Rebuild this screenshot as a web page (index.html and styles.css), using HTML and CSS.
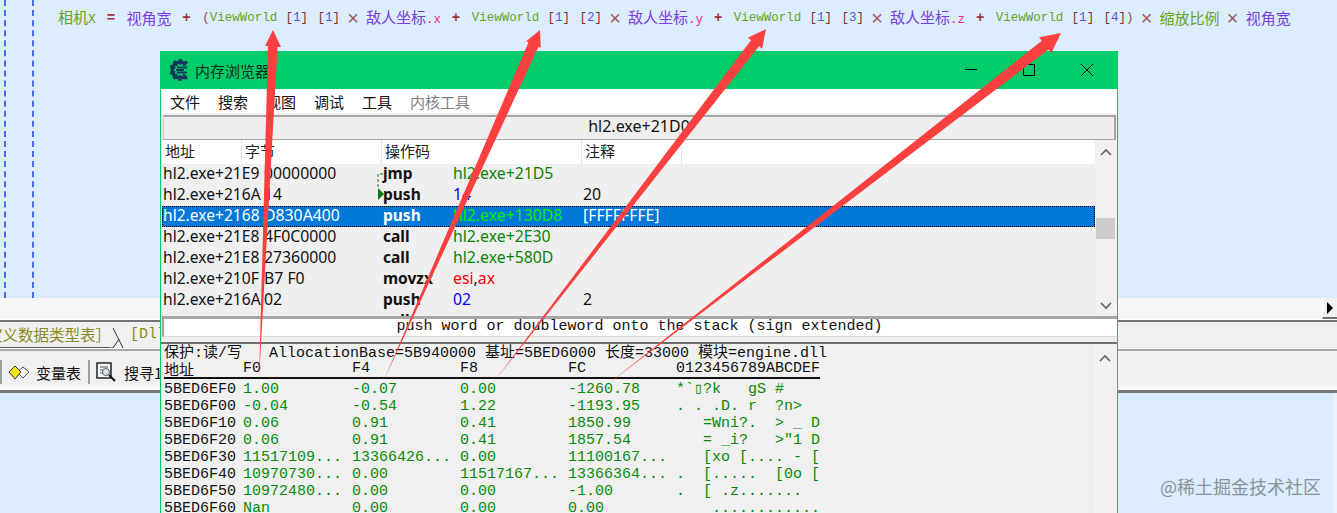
FILE: index.html
```html
<!DOCTYPE html>
<html lang="zh">
<head>
<meta charset="utf-8">
<title>内存浏览器</title>
<link rel="stylesheet" href="styles.css">
</head>
<body>
<div class="desktop">
  <section class="editor">
    <div class="gutter">
      <div class="code">
        <div class="formula">
          <span class="green cjk">相机<i>X</i></span>
          <span class="op">=</span>
          <span class="purple cjk">视角宽</span>
          <span class="op">+</span>
          <span class="group"><span class="paren">(</span><span class="green">ViewWorld</span></span>
          <span class="idx">[<b>1</b>]</span><span class="idx idx2">[<b>1</b>]</span>
          <span class="times">×</span>
          <span class="purple cjk">敌人坐标<em>.x</em></span>
          <span class="op">+</span>
          <span class="green">ViewWorld</span>
          <span class="idx">[<b>1</b>]</span><span class="idx idx2">[<b>2</b>]</span>
          <span class="times">×</span>
          <span class="purple cjk">敌人坐标<em>.y</em></span>
          <span class="op">+</span>
          <span class="green">ViewWorld</span>
          <span class="idx">[<b>1</b>]</span><span class="idx idx2">[<b>3</b>]</span>
          <span class="times">×</span>
          <span class="purple cjk">敌人坐标<em>.z</em></span>
          <span class="op">+</span>
          <span class="green">ViewWorld</span>
          <span class="idx">[<b>1</b>]</span>
          <span class="group idx2"><span class="idx">[<b>4</b>]</span><span class="paren">)</span></span>
          <span class="times">×</span>
          <span class="green cjk">缩放比例</span>
          <span class="times">×</span>
          <span class="purple cjk">视角宽</span>
        </div>
      </div>
    </div>
  </section>

  <div class="hscroll">
    <div class="hscroll-btn"><svg width="8" height="14" viewBox="0 0 8 14"><path d="M1 1l6 6-6 6z" fill="#000"/></svg></div>
  </div>

  <div class="tabs">
    <span class="tab-text cjk">定义数据类型表］</span>
    <svg class="tab-slant" width="16" height="24" viewBox="0 0 16 24"><path d="M0 23h3l6-9M3 3l10 20" fill="none" stroke="#333" stroke-width="1"/></svg>
    <span class="tab-next">[Dll</span>
  </div>

  <div class="toolbar">
    <span class="tool-sep"></span>
    <svg class="tool-icon" width="22" height="18" viewBox="0 0 22 18"><path d="M15 4l6 5-6 6-6-6z" fill="#fff" stroke="#555"/><path d="M7 3l6 6-6 7-6-7z" fill="#f4e21c" stroke="#333"/></svg>
    <span class="tool-label cjk">变量表</span>
    <span class="tool-sep"></span>
    <svg class="tool-icon" width="22" height="20" viewBox="0 0 22 20"><path d="M1 1h14v15H1z" fill="#f4f4f4" stroke="#222" stroke-width="1.5"/><path d="M4 5h8M4 8h3M4 11h3" stroke="#555"/><circle cx="10" cy="10" r="3.5" fill="#dfe8ee" stroke="#555"/><path d="M13 13l6 6" stroke="#111" stroke-width="2"/></svg>
    <span class="tool-label cjk">搜寻1</span>
  </div>

  <div class="output">
    <div class="output-main"></div>
    <div class="output-edge"></div>
  </div>

  <div class="window">
    <header class="titlebar">
      <svg class="logo" width="20" height="22" viewBox="0 0 20 22">
        <path d="M16 5.5A8 8 0 1 0 16 16.5" fill="none" stroke="#12395c" stroke-width="3.4"/>
        <path d="M16 5.5A8 8 0 1 0 16 16.5" fill="none" stroke="#12395c" stroke-width="6" stroke-dasharray="2.5 2.5"/>
        <path d="M7 8.5h10M6 11h8M7 13.5h10" stroke="#12395c" stroke-width="1.8"/>
      </svg>
      <span class="title">内存浏览器</span>
      <div class="win-btns">
        <svg width="12" height="12" viewBox="0 0 12 12"><path d="M0 5.5h12" stroke="#000"/></svg>
        <svg width="12" height="12" viewBox="0 0 12 12"><path d="M.5.5h11v11H.5z" fill="none" stroke="#000"/></svg>
        <svg width="12" height="12" viewBox="0 0 12 12"><path d="M0 0l12 12M12 0L0 12" stroke="#000"/></svg>
      </div>
    </header>

    <nav class="menu">
      <span>文件</span><span>搜索</span><span>视图</span><span>调试</span><span>工具</span><span class="disabled">内核工具</span>
    </nav>

    <div class="addrbar">hl2.exe+21D0</div>

    <div class="disasm">
      <div class="disasm-main">
        <div class="cols">
          <span class="c1">地址</span><span class="c2">字节</span><span class="c3">操作码</span><span class="c4">注释</span>
        </div>
        <div class="rows">
          <svg class="jump" width="8" height="28" viewBox="0 0 8 28"><path d="M6 1H1v14" fill="none" stroke="#0a7a0a" stroke-dasharray="3 2"/><path d="M1 15l6 6-6 6z" fill="#0a7a0a"/></svg>
          <div class="row"><span class="addr">hl2.exe+21E9</span><span>00000000</span><b>jmp</b><span class="ref">hl2.exe+21D5</span><span></span></div>
          <div class="row"><span class="addr">hl2.exe+216A</span><span>14</span><b>push</b><span class="num">14</span><span>20</span></div>
          <div class="row selected"><span class="addr">hl2.exe+2168</span><span>D830A400</span><b>push</b><span class="ref">hl2.exe+130D8</span><span>[FFFFFFFE]</span></div>
          <div class="row"><span class="addr">hl2.exe+21E8</span><span>4F0C0000</span><b>call</b><span class="ref">hl2.exe+2E30</span><span></span></div>
          <div class="row"><span class="addr">hl2.exe+21E8</span><span>27360000</span><b>call</b><span class="ref">hl2.exe+580D</span><span></span></div>
          <div class="row"><span class="addr">hl2.exe+210F</span><span>B7 F0</span><b>movzx</b><span class="reg">esi<u>,</u>ax</span><span></span></div>
          <div class="row"><span class="addr">hl2.exe+216A</span><span>02</span><b>push</b><span class="num">02</span><span>2</span></div>
          <div class="row"><span></span><span></span><b>call</b><span></span><span></span></div>
        </div>
      </div>
      <div class="vscroll">
        <svg class="chev" width="12" height="8" viewBox="0 0 12 8"><path d="M1 7l5-5 5 5" fill="none" stroke="#606060" stroke-width="1.6"/></svg>
        <div class="thumb"></div>
        <svg class="chev chev-end" width="12" height="8" viewBox="0 0 12 8"><path d="M1 1l5 5 5-5" fill="none" stroke="#606060" stroke-width="1.6"/></svg>
      </div>
    </div>

    <div class="hint">push word or doubleword onto the stack (sign extended)</div>

    <div class="hexpane">
      <div class="hexmain">
        <div class="protect">保护:读/写   AllocationBase=5B940000 基址=5BED6000 长度=33000 模块=engine.dll</div>
        <div class="hexgrid head">
          <span class="cjk">地址</span><span>F0</span><span>F4</span><span>F8</span><span>FC</span><span>0123456789ABCDEF</span>
        </div>
        <div class="hexgrid"><span>5BED6EF0</span><i>1.00</i><i>-0.07</i><i>0.00</i><i>-1260.78</i><i>*`▯?k   gS #</i></div>
        <div class="hexgrid"><span>5BED6F00</span><i>-0.04</i><i>-0.54</i><i>1.22</i><i>-1193.95</i><i>. . .D. r  ?n&gt;</i></div>
        <div class="hexgrid"><span>5BED6F10</span><i>0.06</i><i>0.91</i><i>0.41</i><i>1850.99</i><i>   =Wni?.  &gt; _ D</i></div>
        <div class="hexgrid"><span>5BED6F20</span><i>0.06</i><i>0.91</i><i>0.41</i><i>1857.54</i><i>   = _i?   &gt;"1 D</i></div>
        <div class="hexgrid"><span>5BED6F30</span><i>11517109...</i><i>13366426...</i><i>0.00</i><i>11100167...</i><i>   [xo [.... - [</i></div>
        <div class="hexgrid"><span>5BED6F40</span><i>10970730...</i><i>0.00</i><i>11517167...</i><i>13366364...</i><i>.  [.....  [0o [</i></div>
        <div class="hexgrid"><span>5BED6F50</span><i>10972480...</i><i>0.00</i><i>0.00</i><i>-1.00</i><i>.  [ .z.......</i></div>
        <div class="hexgrid"><span>5BED6F60</span><i>Nan</i><i>0.00</i><i>0.00</i><i>0.00</i><i>    ............</i></div>
      </div>
      <div class="hexscroll">
        <svg class="chev" width="12" height="8" viewBox="0 0 12 8"><path d="M1 7l5-5 5 5" fill="none" stroke="#606060" stroke-width="1.6"/></svg>
      </div>
    </div>
  </div>

  <svg class="arrows" width="1337" height="513" viewBox="0 0 1337 513">
    <g fill="#fc3f3f">
      <polygon points="259,380 268,46 265,46 273,30 281,47 277.5,47"/>
      <polygon points="384,380 528.5,42.4 526.2,41.3 540,30 540.8,47.9 538.5,46.8"/>
      <polygon points="493,383 751,40.3 747.9,37.8 766,29 762.1,48.8 759,46.3"/>
      <polygon points="608,384 1041.8,40.8 1039.1,37.3 1061,33 1051.3,53.1 1048.6,49.6"/>
    </g>
  </svg>

  <div class="watermark">@稀土掘金技术社区</div>
</div>
</body>
</html>
```
FILE: styles.css
```css
* { box-sizing: border-box; }
html, body { margin: 0; padding: 0; }
body { font-family: "Noto Sans", "Noto Sans CJK SC", sans-serif; }
.cjk { font-family: "Noto Sans CJK SC", sans-serif; }

.desktop {
  position: relative;
  width: 1337px;
  height: 513px;
  overflow: hidden;
  display: flex;
  flex-direction: column;
  background: #f0f0f0;
}

/* editor behind the window */
.editor { height: 298px; background: #dbecfd; padding-left: 4px; flex: none; }
.gutter { height: 100%; border-left: 2px dashed #4a6af0; padding-left: 26px; }
.code { height: 100%; border-left: 2px dashed #4a6af0; padding: 7px 0 0 24px; }
.formula {
  display: flex;
  align-items: center;
  gap: 8.3px;
  height: 22px;
  white-space: pre;
  font: 12.5px/22px "Liberation Mono", "Noto Sans CJK SC", monospace;
}
.formula .cjk { font-size: 15px; }
.formula i { font-style: normal; font-family: "Liberation Mono", monospace; font-size: 13px; }
.formula em { font-style: normal; font-family: "Liberation Mono", monospace; font-size: 12.5px; color: #f5298c; }
.green { color: #67a31f; }
.purple { color: #7a3de2; }
.op { color: #a3323a; font-weight: 700; font-size: 14px; margin: 0 3.2px 0 2.5px; }
.times {
  display: flex;
  justify-content: center;
  width: 9.5px;
  color: #a35860;
  font: 20px/22px "Liberation Sans", sans-serif;
}
.paren { color: #a04848; }
.group { display: inline-flex; }
.idx { color: #8c2b2b; }
.idx b { color: #5a55d8; font-weight: 400; }
.idx2 { margin-left: 1px; }

.hscroll {
  height: 21px;
  flex: none;
  display: flex;
  justify-content: flex-end;
  background: #f7f7f7;
  background-image: conic-gradient(#f4f4f4 25%, #fafafa 0 50%, #f4f4f4 0 75%, #fafafa 0);
  background-size: 2px 2px;
}
.hscroll-btn {
  width: 15px;
  height: 21px;
  display: flex;
  align-items: center;
  justify-content: center;
  background: #f2f2f2;
  border-left: 1px solid #fff;
  border-bottom: 2px solid #707070;
}
.tabs {
  height: 30px;
  flex: none;
  display: flex;
  align-items: center;
  border-top: 1px solid #fff;
  border-bottom: 1px solid #fff;
  box-shadow: inset 0 2px 0 #777;
  position: relative;
  overflow: hidden;
  white-space: nowrap;
}
.tabs::after {
  content: "";
  position: absolute;
  left: 0;
  bottom: 0;
  width: 110px;
  height: 1px;
  background: #555;
}
.tab-text {
  margin-left: -13px;
  width: 125px;
  flex: none;
  font-size: 15.5px;
  color: #8a8a22;
}
.tab-slant { flex: none; margin: 5px 0 0 -2px; }
.tab-next {
  margin-left: 4px;
  font: 15px "Liberation Mono", monospace;
  color: #8a8a22;
}
.toolbar {
  height: 41px;
  flex: none;
  display: flex;
  align-items: center;
  gap: 6px;
  padding: 6px 0 3px 0;
  border-top: 2px solid #a8a8a8;
  background: #f0f0f0;
  white-space: nowrap;
  overflow: hidden;
}
.tool-sep { width: 2px; height: 24px; background: #9c9c9c; flex: none; }
.tool-icon { flex: none; }
.tool-label { font-size: 15px; color: #111; margin-right: 1px; }
.output {
  flex: 1;
  display: flex;
  border-top: 3px solid #777;
  box-shadow: 0 -4px 0 #fafafa;
}
.output-main { flex: 1; background: #dbecfd; }
.output-edge { width: 4px; background: #e9f1fa; }

/* floating memory viewer */
.window {
  position: absolute;
  left: 160px;
  top: 51px;
  width: 958px;
  height: 462px;
  display: flex;
  flex-direction: column;
  background: #f0f0f0;
  border: solid #00cc6a;
  border-width: 0 1px;
  overflow: hidden;
}
.titlebar {
  height: 38px;
  flex: none;
  display: flex;
  align-items: center;
  padding-left: 10px;
  margin: 0 -1px;
  background: #00cc6a;
}
.logo { flex: none; }
.title { margin-left: 5px; font: 15px "Noto Sans CJK SC", sans-serif; color: #0b2b1c; }
.win-btns {
  margin-left: auto;
  display: flex;
  gap: 46px;
  padding-right: 25px;
}
.menu {
  height: 24px;
  flex: none;
  display: flex;
  align-items: center;
  gap: 18px;
  padding-left: 9px;
  background: #fff;
  font: 15px "Noto Sans CJK SC", sans-serif;
  color: #111;
}
.menu .disabled { color: #7f7f7f; }
.addrbar {
  height: 25px;
  flex: none;
  margin: 2px 1px 0 2px;
  background: #eee;
  border-top: 2px solid #a5a5a5;
  border-left: 1px solid #c8c8c8;
  border-right: 2px solid #a5a5a5;
  border-bottom: 1px solid #a5a5a5;
  text-align: center;
  font-size: 16px;
  line-height: 19px;
  color: #111;
}
.disasm { height: 176px; flex: none; display: flex; }
.disasm-main { width: 933px; margin-left: 1px; flex: none; display: flex; flex-direction: column; }
.cols {
  height: 24px;
  flex: none;
  display: flex;
  background: #fff;
  font: 15px/22px "Noto Sans CJK SC", sans-serif;
  color: #222;
}
.cols span { padding-left: 3px; border-right: 1px solid #e4e4e4; }
.c1 { width: 80px; }
.c2 { width: 140px; }
.c3 { width: 200px; }
.c4 { width: 100px; }
.rows { position: relative; flex: 1; overflow: hidden; background: #efefef; }
.row {
  height: 21px;
  display: grid;
  grid-template-columns: 101px 119px 70px 130px 1fr;
  padding-left: 1px;
  font-size: 15.8px;
  line-height: 19px;
  color: #111;
  white-space: nowrap;
}
.row .addr { font-size: 15.6px; }
.row b { font-weight: 700; font-size: 15.5px; }
.ref { color: #0a820a; }
.num { color: #0000ff; }
.reg { color: #f00; }
.reg u { color: #111; text-decoration: none; }
.selected { background: #0078d7; color: #fff; outline: 1px dotted #000; outline-offset: -1px; }
.selected .ref { color: #00f000; }
.jump { position: absolute; left: 215px; top: 9px; }
.vscroll {
  flex: 1;
  display: flex;
  flex-direction: column;
  align-items: center;
  padding: 8px 1px 6px;
  margin-right: 1px;
  background: #f0f0f0;
}
.chev { flex: none; }
.chev-end { margin-top: auto; }
.thumb { align-self: stretch; height: 21px; margin-top: 62px; background: #cdcdcd; }
.hint {
  height: 21px;
  flex: none;
  margin: 0 0 0 1px;
  border-top: 3px solid #a5a5a5;
  border-left: 2px solid #a5a5a5;
  border-bottom: 1px solid #d8d8d8;
  background: #fff;
  text-align: center;
  font: 15px/15px "Liberation Mono", monospace;
  color: #111;
  overflow: hidden;
  padding-right: 2px;
}
.hexpane {
  flex: 1;
  min-height: 0;
  margin-top: 5px;
  display: flex;
  border-top: 2px solid #707070;
  overflow: hidden;
}
.hexmain {
  width: 933px;
  flex: none;
  padding: 1px 0 0 3px;
  font: 15px/17px "Liberation Mono", "Noto Sans CJK SC", monospace;
  color: #111;
}
.protect { height: 16px; white-space: pre; }
.hexgrid {
  display: grid;
  grid-template-columns: 79px 109px 108px 108px 108px 1fr;
  height: 17px;
}
.hexgrid span, .hexgrid i { white-space: pre; }
.hexgrid.head {
  height: 18px;
  width: 656px;
  border-bottom: 2px solid #111;
  margin-bottom: 2px;
  line-height: 16px;
}
.hexgrid i { font-style: normal; color: #0a8a0a; }
.hexscroll {
  flex: 1;
  display: flex;
  justify-content: center;
  align-items: flex-start;
  padding-top: 10px;
  margin-right: 2px;
  border-left: 1px solid #fafafa;
}

.arrows { position: absolute; left: 0; top: 0; pointer-events: none; }
.watermark {
  position: absolute;
  right: 16px;
  bottom: 16px;
  font: 18px/22px "Noto Sans CJK SC", sans-serif;
  color: #8a939c;
}
```
